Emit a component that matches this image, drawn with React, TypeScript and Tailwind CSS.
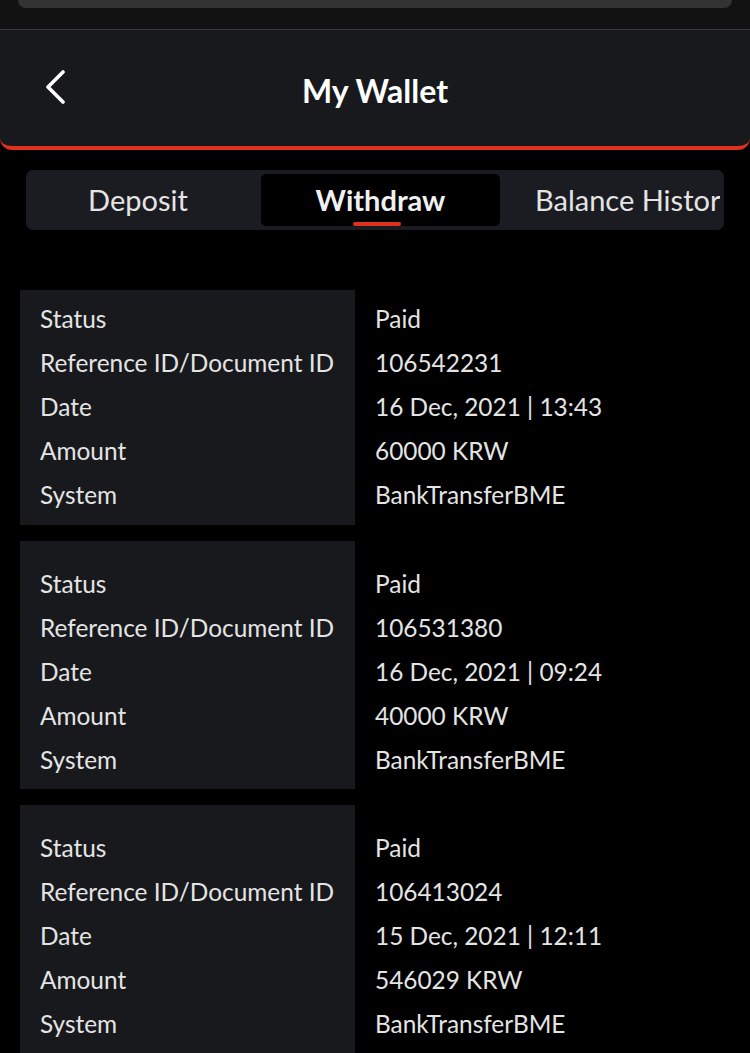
import React from "react";

type Row = { status: string; id: string; date: string; amount: string; system: string };

const rows: Row[] = [
  { status: "Paid", id: "106542231", date: "16 Dec, 2021 | 13:43", amount: "60000 KRW", system: "BankTransferBME" },
  { status: "Paid", id: "106531380", date: "16 Dec, 2021 | 09:24", amount: "40000 KRW", system: "BankTransferBME" },
  { status: "Paid", id: "106413024", date: "15 Dec, 2021 | 12:11", amount: "546029 KRW", system: "BankTransferBME" },
];

const labels = ["Status", "Reference ID/Document ID", "Date", "Amount", "System"];

function Card({ r, first }: { r: Row; first: boolean }) {
  const values = [r.status, r.id, r.date, r.amount, r.system];
  const pad = first ? "pt-[7px] pb-[8px]" : "pt-[21px] pb-[7px]";
  return (
    <div className="flex">
      <div className={`w-[335px] bg-[#18191d] pl-[20px] ${pad}`}>
        {labels.map((l) => (
          <div key={l} className="h-[44px] leading-[44px] whitespace-nowrap">{l}</div>
        ))}
      </div>
      <div className={`pl-[20px] ${pad}`}>
        {values.map((v, i) => (
          <div key={i} className="h-[44px] leading-[44px] whitespace-nowrap">{v}</div>
        ))}
      </div>
    </div>
  );
}

export default function App() {
  return (
    <div
      className="w-[750px] h-[1053px] overflow-hidden bg-black text-[#e4e4e4]"
      style={{ fontFamily: "Lato, 'Noto Sans', sans-serif" }}
    >
      {/* top strip */}
      <div className="h-[30px] bg-[#121212] border-b border-[#3a3a3a] px-[18px]">
        <div className="h-[8px] bg-[#333333] rounded-b-[14px]" />
      </div>

      {/* header */}
      <div className="h-[120px] bg-[#18191d] rounded-b-[12px] border-b-[4px] border-[#e0301e] relative flex items-center justify-center">
        <div className="absolute left-[44px] top-[40px]">
          <svg width="22" height="34" viewBox="0 0 22 34" fill="none">
            <path d="M19 2 L4 17 L19 32" stroke="white" strokeWidth="3.6" strokeLinecap="round" strokeLinejoin="round" />
          </svg>
        </div>
        <div className="text-white font-bold text-[32px] leading-none pt-[6px]">My Wallet</div>
      </div>

      {/* tabs */}
      <div className="mx-[26px] mt-[20px] h-[60px] bg-[#1b1c21] rounded-[7px] p-[4px] flex overflow-hidden text-[29px]">
        <div className="w-[216px] flex items-center justify-center">Deposit</div>
        <div className="ml-[15px] w-[239px] bg-black rounded-[5px] relative flex items-center justify-center font-bold text-[#f0f0f0]">
          Withdraw
          <div className="absolute bottom-[0px] left-[92px] w-[48px] h-[4px] rounded-full bg-[#e0301e]" />
        </div>
        <div className="flex-1 pl-[35px] whitespace-nowrap overflow-hidden flex items-center">Balance Histor</div>
      </div>

      {/* list */}
      <div className="mt-[60px] px-[20px] flex flex-col gap-[16px] text-[24.4px]">
        {rows.map((r, i) => (
          <Card key={i} r={r} first={i === 0} />
        ))}
      </div>
    </div>
  );
}
